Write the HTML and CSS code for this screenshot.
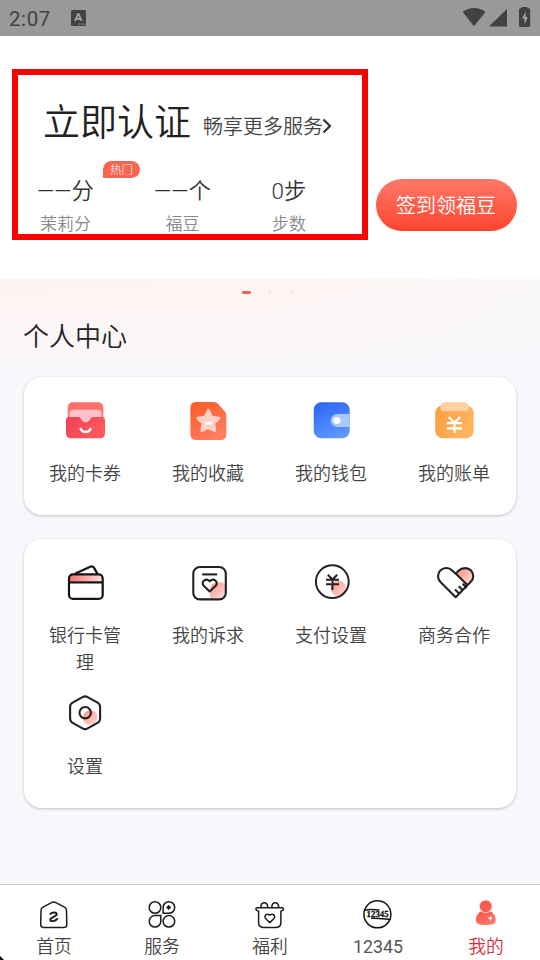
FILE: index.html
```
<!DOCTYPE html>
<html lang="zh-CN">
<head>
<meta charset="utf-8">
<title>个人中心</title>
<link rel="stylesheet" href="styles.css">
</head>
<body>
<div class="app">
  <header class="status">
    <span class="clock">2:07</span>
    <svg class="status-app" viewBox="0 0 15 16"><rect width="15" height="16" rx="1.500" fill="#424242"/><path d="M4 11 7 4h.6l3 7M5.200 8.800h4.200" fill="none" stroke="#a8a8a8" stroke-width="1.700"/><path d="M8 14h6" stroke="#a8a8a8" stroke-width="1.200" stroke-dasharray="1.200 1"/></svg>
    <svg class="status-icons" viewBox="462 6 70 22"><path d="M462.700 12c6-5.300 16.700-5.300 22.700 0L474 26.300z" fill="#424242"/><path d="M507 9v17.500h-18.200z" fill="#424242"/><path d="M521.500 8.200v-1.200h6v1.200h1.200q1.500 0 1.500 1.500v15.800q0 1.500-1.500 1.500h-8.200q-1.500 0-1.500-1.500V9.700q0-1.500 1.500-1.500z" fill="#424242"/><path d="M525.800 11.500l-3.600 7h2.400v6l3-7.500h-2.200z" fill="#a8a8a8"/></svg>
  </header>

  <section class="hero">
    <div class="account">
      <div class="headline">
        <span class="verify">立即认证</span>
        <span class="more">畅享更多服务</span>
        <svg class="chevron" viewBox="0 0 10 16"><path d="M1.500 1.500 8 8l-6.500 6.500" fill="none" stroke="#333" stroke-width="2.200"/></svg>
      </div>
      <div class="stats">
        <div class="stat"><span class="value">——分</span><span class="name">茉莉分</span><span class="hot">热门</span></div>
        <div class="stat"><span class="value">——个</span><span class="name">福豆</span></div>
        <div class="stat"><span class="value">0步</span><span class="name">步数</span></div>
      </div>
    </div>
    <button class="checkin">签到领福豆</button>
  </section>

  <main class="content">
    <div class="pager"><i class="on"></i><i></i><i></i></div>
    <h1 class="section-title">个人中心</h1>

    <div class="card card-main">
      <div class="item">
        <svg class="icon" viewBox="63 399 44 44">
          <defs>
            <linearGradient id="coupon" x1="0" y1="0" x2="1" y2=".5"><stop stop-color="#f0405a"/><stop offset="1" stop-color="#ff5a58"/></linearGradient>
            <linearGradient id="fav" x1="0" y1="0" x2=".6" y2="1"><stop stop-color="#fc5a22"/><stop offset="1" stop-color="#ff7d62"/></linearGradient>
            <linearGradient id="wallet" x1=".2" y1="0" x2=".6" y2="1"><stop stop-color="#2a68f5"/><stop offset="1" stop-color="#5f98ff"/></linearGradient>
            <linearGradient id="bill" x1="0" y1="0" x2="1" y2=".4"><stop stop-color="#ff9c3e"/><stop offset="1" stop-color="#ffb461"/></linearGradient>
            <linearGradient id="blush" x1="0" y1="0" x2="1" y2="0"><stop stop-color="#ff7069"/><stop offset="1" stop-color="#ffdedb"/></linearGradient>
            <linearGradient id="spot" x1="0" y1="0" x2="1" y2="1"><stop stop-color="#ff8e85"/><stop offset="1" stop-color="#ffe0dc"/></linearGradient>
            <linearGradient id="user" x1="0" y1="0" x2="1" y2="1"><stop stop-color="#fb5145"/><stop offset="1" stop-color="#ff8070"/></linearGradient>
          </defs>
          <rect x="67.700" y="402.300" width="35.600" height="24" rx="5" fill="#ff706b"/>
          <rect x="69.500" y="409.800" width="32" height="18" rx="3.500" fill="#ffc0c8"/>
          <path d="M69 417h9.500c3 0 2.500 5.300 7.200 5.300s4.200-5.300 7.200-5.300h9q3.100 0 3.100 3v13.300q0 5-5 5H71q-5 0-5-5V420q0-3 3-3z" fill="url(#coupon)"/>
          <path d="M80.700 428.800c1.500 4.200 8.300 4.200 9.800 0" fill="none" stroke="#fff" stroke-width="2.400" stroke-linecap="round"/>
        </svg>
        <span class="label">我的卡券</span>
      </div>
      <div class="item">
        <svg class="icon" viewBox="186 399 44 44">
          <path d="M196 402h17.500q3 0 5 2.300l6 7q1.900 2.200 1.900 5V434q0 6-6 6h-24q-6 0-6-6v-26q0-6 5.600-6z" fill="url(#fav)"/>
          <path d="M208.400 410.300l3.300 6.800 7.300 1.100-5.300 5.300 1.200 7.300-6.500-3.400-6.600 3.400 1.300-7.300-5.300-5.300 7.300-1.100z" fill="#ffd0c5" stroke="#ffd0c5" stroke-width="2.800" stroke-linejoin="round"/>
          <path d="M206.500 423.400h4.200" stroke="#fff" stroke-width="2.600" stroke-linecap="round"/>
        </svg>
        <span class="label">我的收藏</span>
      </div>
      <div class="item">
        <svg class="icon" viewBox="309 399 44 44">
          <rect x="313.700" y="402.200" width="36" height="36" rx="7.500" fill="url(#wallet)"/>
          <path d="M349.700 414h-12.500a6.500 6.500 0 0 0 0 13h12.500z" fill="#a9c8ff"/>
          <circle cx="337" cy="420.500" r="3.600" fill="#fff"/>
        </svg>
        <span class="label">我的钱包</span>
      </div>
      <div class="item">
        <svg class="icon" viewBox="432 399 44 44">
          <rect x="435.200" y="405.500" width="38.500" height="32.700" rx="7.500" fill="url(#bill)"/>
          <path d="M445 402.300h19.500q2.500 0 3.500 2.200l.7 1.500c1.200 2.600-.3 5.300-3.200 5.300H444c-2.900 0-4.400-2.700-3.200-5.300l.7-1.500q1-2.200 3.500-2.200z" fill="#ffd0a1"/>
          <path d="M448.700 417l5.800 5.800 5.500-5.800M446.800 423.200h15.200M446.800 428.300h15.200M454.500 423v10" fill="none" stroke="#fff" stroke-width="2.300"/>
        </svg>
        <span class="label">我的账单</span>
      </div>
    </div>

    <div class="card card-tools">
      <div class="item">
        <svg class="icon" viewBox="63 560 44 44">
          <path d="M69.500 581v-3q0-4 4-4h25q4 0 4 4v3z" fill="url(#blush)"/>
          <g fill="none" stroke="#151515" stroke-width="2.200" stroke-linejoin="round"><rect x="69" y="574.300" width="33.700" height="24.600" rx="4"/><path d="M69 582.300h33.700M75 573.800l15.200-7.100q2.500-1.100 3.900 1.200l3.400 6"/></g>
        </svg>
        <span class="label">银行卡管理</span>
      </div>
      <div class="item">
        <svg class="icon" viewBox="186 560 44 44">
          <path d="M210.200 598v-7.500q0-8 8-8h3q4 0 4 4v7.500q0 4-4 4z" fill="url(#spot)"/>
          <g fill="none" stroke="#222" stroke-width="2.100" stroke-linejoin="round"><rect x="193.300" y="567" width="32.500" height="32.400" rx="6.500"/><path d="M202.200 574.400h15"/><path d="M209.700 591.500l-6-5.800c-3.300-3.500 1.800-8.400 6-4.400 4.200-4 9.300.9 6 4.400z"/></g>
        </svg>
        <span class="label">我的诉求</span>
      </div>
      <div class="item">
        <svg class="icon" viewBox="309 560 44 44">
          <circle cx="338.500" cy="588.500" r="7.800" fill="url(#spot)"/>
          <g fill="none" stroke="#222" stroke-width="2"><circle cx="332.300" cy="581.700" r="16.400"/><path d="M327.800 574.800l4.700 4.700 4.700-4.700M326 579.800h13M326 584.300h13M332.500 579.500v10.500"/></g>
        </svg>
        <span class="label">支付设置</span>
      </div>
      <div class="item">
        <svg class="icon" viewBox="432 560 44 44">
          <path d="M457 574l3-4c7-4.500 16.500 3 11.500 10.500l-4.500 4z" fill="url(#spot)"/>
          <path d="M467.300 585 456 573.700l2.500-3c4.200-3.800 9.800-3 12.300-.5 3.300 3.200 3.300 8.300 0 11.600L455.700 597.200 440.500 582c-3.300-3.300-3.300-8.500 0-11.700 3.500-3.300 8.500-3 11.700.2l3.800 3.500M455.500 590l3.500 3.500M459.300 586.800l3.400 3.400M463.200 584.300l3 3" fill="none" stroke="#222" stroke-width="2.100" stroke-linejoin="round" stroke-linecap="round"/>
        </svg>
        <span class="label">商务合作</span>
      </div>
      <div class="item">
        <svg class="icon" viewBox="63 691 44 44">
          <circle cx="90.300" cy="717.700" r="7.400" fill="url(#spot)"/>
          <g fill="none" stroke="#222" stroke-width="2.100"><path d="M82.600 697.100q2.500-1.400 5 0l10 5.600q2.500 1.400 2.500 4.200v11.700q0 2.800-2.500 4.200l-10 5.600q-2.500 1.400-5 0l-10-5.600q-2.500-1.400-2.500-4.200v-11.700q0-2.800 2.500-4.200z"/><circle cx="85.200" cy="712.700" r="5.700"/></g>
        </svg>
        <span class="label">设置</span>
      </div>
    </div>
  </main>

  <nav class="tabs">
    <a class="tab">
      <svg class="tab-icon" viewBox="36 896 36 36"><g fill="none" stroke="#1c1c1c" stroke-width="1.500" stroke-linejoin="round" stroke-linecap="round"><path d="M51.500 902.700q2.200-1.200 4.400 0l8.600 4.500q2 1 2 3.200l.3 14q0 3-3 3H43.700q-3 0-3-3l.3-14q0-2.200 2-3.200z"/><path d="M50.300 914c1.500-1.800 6.300-2.300 6.500.3.200 2.200-6.600 2.800-6.600 5.400 0 2 4.500 1.900 7-.7" stroke-width="1.900"/></g></svg>
      <span>首页</span>
    </a>
    <a class="tab">
      <svg class="tab-icon" viewBox="144 896 36 36"><g fill="none" stroke="#1c1c1c" stroke-width="1.500"><circle cx="155" cy="907.500" r="5.800"/><path d="M163.100 913.300v-5.800a5.800 5.800 0 1 1 5.800 5.800zM160.800 915.500v5.800a5.800 5.800 0 1 1-5.800-5.800z"/><circle cx="168.900" cy="921.300" r="5.800"/></g><path d="M168.700 905l2.500 2.500-2.500 2.500-2.500-2.500z" fill="#111"/></svg>
      <span>服务</span>
    </a>
    <a class="tab">
      <svg class="tab-icon" viewBox="252 896 36 36"><g fill="none" stroke="#1c1c1c" stroke-width="1.500" stroke-linejoin="round"><path d="M257.200 907.700h25q1.300 0 1.300 1.300t-1.300 1.600l-1.300.5v11.500q0 4.800-4.800 4.800H263.400q-4.800 0-4.800-4.800v-11.500l-1.300-.5q-1.400-.3-1.400-1.600t1.300-1.300zM260.800 907.500c0-3.300 1.800-4.800 3.500-4.800s3.400 1.500 3.400 4.800M271.800 907.500c0-3.300 1.700-4.800 3.400-4.800s3.500 1.500 3.500 4.800"/><path d="M269.800 922.600l-4-3.800c-2.500-2.500 1-6.200 4-3.600 3-2.600 6.500 1.100 4 3.600z"/></g></svg>
      <span>福利</span>
    </a>
    <a class="tab">
      <svg class="tab-icon" viewBox="360 896 36 36"><g fill="none" stroke="#151515"><circle cx="377.400" cy="914.300" r="13.500" stroke-width="1.500"/><path d="M364.500 910.400c5-1.800 9.500-.8 15-.4M371 918.300c8-.3 12.500.6 19.500 1.200" stroke-width="1.500"/></g><text class="hotline" x="366.600" y="917.300" textLength="22" lengthAdjust="spacingAndGlyphs">12345</text></svg>
      <span class="digits">12345</span>
    </a>
    <a class="tab active">
      <svg class="tab-icon" viewBox="468 896 36 36"><path d="M480.300 911.500h11q4.400 3.500 4.400 9 0 4.500-9.900 4.500t-9.900-4.500q0-5.500 4.400-9z" fill="url(#user)"/><circle cx="485.700" cy="906.300" r="6.400" fill="#fb5c4e" stroke="#fff" stroke-width=".7"/><path d="M490.300 915.700l.8 1.800 1.800.8-1.800.8-.8 1.800-.8-1.800-1.800-.8 1.800-.8z" fill="#fff"/></svg>
      <span>我的</span>
    </a>
    <i class="corner"></i>
  </nav>
</div>
</body>
</html>
```
FILE: styles.css
```
* { box-sizing: border-box; }
body {
  margin: 0;
  font-family: Roboto, "Noto Sans CJK SC", sans-serif;
  font-weight: 350;
  color: #333;
}
.app {
  width: 540px;
  height: 960px;
  display: flex;
  flex-direction: column;
  overflow: hidden;
  background: #f7f7fc;
}
.status {
  height: 36px;
  flex: none;
  display: flex;
  align-items: center;
  padding: 0 8px 0 9px;
  background: #999;
}
.clock { font-size: 20.5px; font-weight: 400; letter-spacing: .6px; color: #424242; line-height: 36px; padding-top: 2px; width: 62px; }
.status-app { width: 15px; height: 16px; }
.status-icons { width: 70px; height: 22px; margin-left: auto; margin-bottom: 2px; }

.hero {
  height: 243px;
  flex: none;
  display: flex;
  align-items: flex-start;
  gap: 8px;
  padding: 33px 12px 0;
  background: #fff;
}
.account {
  width: 356px;
  height: 171px;
  border: 6px solid #f00;
  padding: 22px 0 0 19px;
}
.headline { display: flex; align-items: center; height: 52px; padding-left: 6px; }
.verify { font-size: 37px; line-height: 52px; color: #222; width: 160px; padding-top: 1px; white-space: nowrap; }
.more { font-size: 20px; line-height: 30px; color: #444; padding-top: 8px; white-space: nowrap; }
.chevron { width: 10px; height: 16px; margin-top: 5px; margin-left: -1px; }
.stats { display: grid; grid-template-columns: 57px 59px 36px; column-gap: 59px; padding-top: 25px; }
.stat { position: relative; display: flex; flex-direction: column; align-items: center; white-space: nowrap; }
.value { font-size: 22.4px; line-height: 34px; }
.name { font-size: 17px; line-height: 33px; color: #888; }
.hot {
  position: absolute;
  left: 66px;
  top: -13px;
  width: 37px;
  height: 17px;
  padding-top: 1px;
  border-radius: 9px 9px 9px 0;
  background: #fa6450;
  color: #fff;
  font-size: 11.5px;
  font-weight: 300;
  line-height: 17px;
  text-align: center;
}
.checkin {
  width: 141px;
  height: 52px;
  margin: 110px 0 0;
  padding: 2px 1px 0 0;
  border: 0;
  border-radius: 26px;
  background: linear-gradient(#ff7968, #ff452f);
  color: #fff;
  font: inherit;
  font-size: 20px;
  line-height: 50px;
}

.content {
  flex: 1;
  padding: 12px 24px 0;
  background: linear-gradient(rgba(247,247,252,0), #f7f7fc 115px), linear-gradient(90deg, #fff3f2, #fff4f2 50%, #fbf8f9);
}
.pager { display: flex; justify-content: center; align-items: center; gap: 20px; height: 3px; padding-right: 5px; }
.pager i { width: 3px; height: 3px; border-radius: 50%; background: #eee6e6; }
.pager .on { width: 9px; border-radius: 2px; background: #f0604f; margin-right: -3px; }
.section-title { margin: 25px 0 22px -1px; font-size: 26px; font-weight: 350; line-height: 36px; color: #222; }
.card {
  display: grid;
  grid-template-columns: repeat(4, 1fr);
  align-content: start;
  background: #fff;
  border-radius: 18px;
  box-shadow: 0 1px 3px rgba(0,0,0,.23);
}
.card-main { height: 138px; padding-top: 22px; }
.card-tools { height: 269px; margin-top: 24px; padding-top: 21px; row-gap: 15px; }
.item { display: flex; flex-direction: column; align-items: center; gap: 17px; }
.card-tools .item { gap: 18px; }
.icon { width: 44px; height: 44px; flex: none; margin-left: -1px; }
.label { width: 74px; margin-left: -1px; font-size: 18px; line-height: 27px; color: #444; text-align: center; word-break: break-all; }

.tabs {
  position: relative;
  flex: none;
  height: 76px;
  display: grid;
  grid-template-columns: repeat(5, 1fr);
  border-top: 1px solid #ccccd0;
  background: #fff;
}
.tab { display: flex; flex-direction: column; align-items: center; padding-top: 11px; font-size: 17.800px; line-height: 30px; color: #444; }
.tab-icon { width: 36px; height: 36px; }
.digits { font-weight: 400; color: #555; }
.active { color: #d8303a; }
.hotline { font-family: "Liberation Serif", serif; font-weight: 700; font-size: 9px; fill: #111; stroke: #111; stroke-width: .3px; }
.corner { position: absolute; left: 0; bottom: 0; width: 4px; height: 4px; background: #000; clip-path: polygon(0 0, 100% 100%, 0 100%); }
```
